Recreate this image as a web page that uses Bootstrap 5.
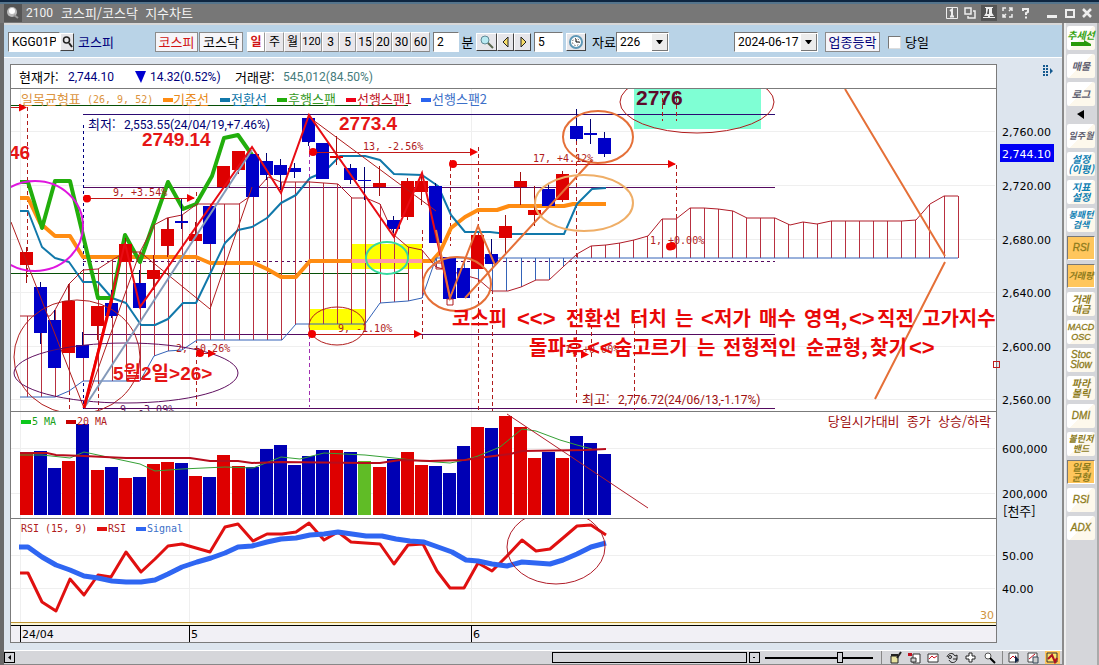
<!DOCTYPE html>
<html lang="ko">
<head>
<meta charset="utf-8">
<meta name="viewport" content="width=device-width, initial-scale=1">
<title>2100 코스피/코스닥 지수차트</title>
<link href="https://cdn.jsdelivr.net/npm/bootstrap@5.3.0/dist/css/bootstrap.min.css" rel="stylesheet">
<style>
body{font:13px/16px "Noto Sans CJK KR",sans-serif;color:#000;background:#dde5ee;overflow-x:hidden}
.num{font:12px/16px Roboto,"Noto Sans CJK KR",sans-serif}
.titlebar{height:23px;background:#777;border-top:2px solid #0d2540;box-shadow:inset 0 2px #54748c;color:#f2f2f2;padding:0 6px 0 4px}
.titlebar button{border:0;padding:0;background:none;color:#eee;line-height:0}
.frame-left{border-left:4px solid #6a6a6a}
.toolbar{height:35px;background:#b9d3e7;border-top:2px solid #d8d8d8;border-bottom:1px solid #fff;padding:2px 4px 0 4px}
.toolbar input[type=text],.toolbar select{height:20px;border:1px solid #777;border-right-color:#fff;border-bottom-color:#fff;background:#fff;padding:0 3px;border-radius:0;font:12px/16px Roboto,sans-serif;color:#000;min-width:0}
.toolbar select{appearance:none;background:#fff url("data:image/svg+xml,%3Csvg xmlns='http://www.w3.org/2000/svg' width='17' height='18'%3E%3Cpath d='M0 0h17v18H0z' fill='%23fff'/%3E%3Cpath d='M1 1h16v17H1z' fill='%23777'/%3E%3Cpath d='M1 1h15v16H1z' fill='%23ececec'/%3E%3Cpath d='M5 7h7l-3 4h-1z'/%3E%3C/svg%3E") right center no-repeat}
.flat{height:20px;border:1px solid #8c8c8c;background:#f6f5f9;padding:0;font:inherit;line-height:16px;color:#000}
.per{background:#e9e7eb;border-color:#fff #999 #888 #fff;font:12px/16px Roboto,"Noto Sans CJK KR",sans-serif}
.per.tight{font-size:11px}
.per.sel{color:#d01414;background:#fff;font-weight:bold}
.raised{height:18px;border:1px solid;border-color:#fff #444 #444 #fff;background:#e6e6ea;padding:0;line-height:0}
.tick{width:13px;height:13px;border:1px solid #777;border-right-color:#ddd;border-bottom-color:#ddd;background-color:#fff}
.info{height:24px;background:#fff;border:1px solid #7b7b7b;border-bottom:0;padding:0 8px;margin-top:6px}
.plot{display:block;width:100%;height:auto}
.plot text{white-space:pre}
.mono{font:10px "DejaVu Sans Mono",monospace}
.axis{font:11px "DejaVu Sans",sans-serif}
.note{font:bold 19px "Liberation Sans","Noto Sans CJK KR",sans-serif;fill:#e51515}
.big{font:bold 20px "Noto Sans CJK KR",sans-serif;fill:#e80808}
.ang{font:bold 22px "Liberation Sans",sans-serif}
.side{width:37px;background:#d5d6da;border-left:2px solid #8b8b8b;border-right:2px solid #aaa;padding:3px 0 0 3px;box-shadow:inset 2px 0 #eee}
.side button{width:28px;height:24px;margin-bottom:4px;border:0;border-radius:2px;padding:0;background:linear-gradient(135deg,#fff 50%,#fdf8ec 50%);font:italic bold 10px/10px "Noto Sans CJK KR",sans-serif;color:#8d7b1c;white-space:nowrap}
.side button.lat{font:italic 10px/10px "Liberation Sans",sans-serif;-webkit-text-stroke:.3px}
.side button.small-lat{font-size:9px}
.side button.on{background:#ffc65c;border:1px solid;border-color:#777 #fff #fff #777;border-radius:0}
.side .wide-ko{font-size:9px}
.side .gray{color:#5e5e70}.side .teal{color:#1181b4}.side .grn{color:#35a312}
.side .arrow{width:28px;height:14px;line-height:0;text-align:center}
.foot{height:15px;background:#d5d6da;border-top:1px solid #fff;border-bottom:1px solid #888}
.foot button{border:0;padding:0;background:none;line-height:0}
.foot .sq{width:11px;height:11px;border:1px solid #000}
.thumb{height:11px;border:1px solid #000;width:195px}
input.zoom{appearance:none;width:108px;height:11px;background:linear-gradient(#000,#000) center/100% 2px no-repeat;margin:0}
input.zoom::-webkit-slider-thumb{appearance:none;width:6px;height:11px;border:1px solid #000;background:#d5d6da}
.sep{width:1px;height:13px;background:#888}
</style>
</head>
<body>
<div class="d-flex flex-column min-vh-100">
<header class="titlebar d-flex align-items-center">
  <svg width="18" height="18" viewBox="0 0 18 18" aria-hidden="true"><path d="M0 0h18v18H0z" fill="#555"/><circle cx="8" cy="8" r="5" fill="#bbb"/><circle cx="8" cy="7" r="3" fill="#fff"/><path d="M10 11l4 3" stroke="#999" stroke-width="2"/></svg>
  <span class="ms-1 num">2100</span><span class="ms-2">코스피/코스닥&nbsp; 지수차트</span>
  <div class="ms-auto d-flex align-items-center">
    <button aria-label="1"><svg width="14" height="14" fill="none" stroke="#eee"><path d="M1.500 1.500h11v11h-11z"/><path d="M5 5l2-1.500v7M5 10.500h4" stroke-width="2"/></svg></button>
    <button class="ms-1" aria-label="복사"><svg width="14" height="14" fill="none" stroke="#eee" stroke-width="1.500"><path d="M2 2h6v6H2zM10 5h2v7H5v-2"/></svg></button>
    <button class="ms-1" aria-label="고정"><svg width="16" height="16"><path d="M0 0h16v16H0z" fill="#555"/><path d="M4 2h8v1h-1v5l2 3H3l2-3V3H4zM2 12h12v1H2zM7 10h2v3H7z" fill="#eee"/><path d="M7 4h1v5H6z" fill="#555"/></svg></button>
    <button class="ms-1" aria-label="확대"><svg width="14" height="14" fill="none" stroke="#eee" stroke-width="1.500"><path d="M2 5V2h3M8 2h3v3M11 8v3H8M5 11H2V8M8 5l3-3M5 8l-3 3"/></svg></button>
    <button class="ms-1" aria-label="도움말"><svg width="14" height="14" fill="none" stroke="#eee" stroke-width="2"><path d="M4 5V3h5v3L7 7v2M7 10.500v2"/></svg></button>
    <button class="ms-2 ps-1" aria-label="최소화"><svg width="14" height="14"><path d="M2 9h10v3H2z" fill="#eee"/></svg></button>
    <button class="ms-1" aria-label="최대화"><svg width="14" height="14" fill="none" stroke="#eee" stroke-width="2"><path d="M3 4h8v7H3zM2 4h10"/></svg></button>
    <button class="ms-1" aria-label="닫기"><svg width="12" height="14" fill="none" stroke="#eee" stroke-width="2.500"><path d="M2 3l8 8M10 3l-8 8"/></svg></button>
  </div>
</header>
<div class="d-flex flex-fill frame-left">
<main class="flex-fill d-flex flex-column" style="min-width:0">
  <form class="toolbar d-flex align-items-center" onsubmit="return false">
    <input type="text" aria-label="종목코드" value="KGG01P" style="width:52px">
    <button class="raised" aria-label="종목 검색" style="width:14px"><svg width="11" height="14" fill="none" stroke="#222" stroke-width="1.500"><circle cx="4.500" cy="5" r="3"/><path d="M7 8l3 4" stroke-width="2"/></svg></button>
    <span class="ms-1" style="width:77px;color:#00007b">코스피</span>
    <button class="flat" style="width:43px;color:#d01414">코스피</button>
    <button class="flat me-1" style="width:44px;margin-left:1px">코스닥</button>
    <div class="d-flex" role="group" aria-label="주기" id="periods"></div>
    <input type="text" aria-label="분 단위" value="2" style="width:26px;margin-left:3px">
    <span class="text-center" style="width:17px">분</span>
    <button class="raised" aria-label="돋보기" style="width:21px"><svg width="18" height="16"><circle cx="7" cy="6" r="4" fill="#b8eaf2" stroke="#5f8996"/><path d="M10 9l5 5" stroke="#5b6850" stroke-width="2"/></svg></button>
    <button class="raised" aria-label="이전" style="width:17px"><svg width="14" height="14"><path d="M9 2v10L4 7z" fill="#f7dd67" stroke="#222"/></svg></button>
    <button class="raised" aria-label="다음" style="width:17px"><svg width="14" height="14"><path d="M5 2v10l5-5z" fill="#f7dd67" stroke="#222"/></svg></button>
    <input type="text" aria-label="개수" value="5" style="width:29px;margin-left:3px">
    <button class="raised" aria-label="시간" style="width:20px;margin-left:3px"><svg width="16" height="16" fill="none"><circle cx="8" cy="8" r="6" fill="#fff" stroke="#5e98b7" stroke-width="2"/><path d="M8 5v3h3" stroke="#000"/><circle cx="8" cy="8" r="3.500" stroke="#222" stroke-dasharray="1 2"/></svg></button>
    <label for="cnt" class="text-nowrap" style="margin-left:6px;width:24px">자료</label>
    <select id="cnt" style="width:53px"><option>226</option></select>
    <select aria-label="날짜" style="width:84px;margin-left:65px"><option>2024-06-17</option></select>
    <button class="flat" style="width:55px;margin-left:7px;color:#00007b">업종등락</button>
    <input type="checkbox" id="today" class="form-check-input tick rounded-0 my-0 me-0 ms-2">
    <label for="today" class="ms-1">당일</label>
  </form>
  <section class="d-flex" style="padding-left:6px">
    <div class="info flex-fill d-flex align-items-center text-nowrap">
      <span style="width:49px">현재가:</span><span class="num" style="width:67px;color:#00007b">2,744.10</span>
      <span style="width:100px;color:#00007b" class="num d-flex align-items-center"><svg width="12" height="14"><path d="M0 1h11L6 13z" fill="#0000d0"/></svg>&nbsp;14.32(0.52%)</span>
      <span style="width:48px">거래량:</span><span class="num" style="color:#447b7b">545,012(84.50%)</span>
    </div>
    <div class="text-center" style="width:65px;padding:4px 0 0 38px"><svg width="14" height="14" fill="#14598f"><path d="M1 1h2v2H1zM4 1h2v2H4zM1 4h2v2H1zM4 4h2v2H4zM1 7h2v2H1zM4 7h2v2H4zM1 10h2v2H1zM4 10h2v2H4zM8 4l3 3-3 3z"/></svg></div>
  </section>
  <div style="padding-left:6px">
  <svg class="plot" viewBox="10 88 1052 555" role="img" aria-label="코스피 지수 차트" id="plot">
    <defs>
      <clipPath id="cp"><path d="M11 89h985v322H11z"/></clipPath>
      <clipPath id="cr"><path d="M11 519h985v103H11z"/></clipPath>
      <marker id="ar" viewBox="0 0 8 8" refX="6" refY="4" markerWidth="8" markerHeight="8" markerUnits="userSpaceOnUse"><path d="M0 0l8 4-8 4z" fill="#f00000"/></marker>
      <marker id="dt" viewBox="0 0 8 8" refX="4" refY="4" markerWidth="8" markerHeight="8" markerUnits="userSpaceOnUse"><circle cx="4" cy="4" r="4" fill="#f00000"/></marker>
    </defs>
    <path d="M10 88h987v555H10z" fill="#7b7b7b"/><path d="M11 88h985v554H11z" fill="#fff"/>
    <g stroke="#efefef" shape-rendering="crispEdges"><path d="M11 131.500h984M11 185.500h984M11 239.500h984M11 292.500h984M11 346.500h984M11 399.500h984M11 448.500h984M11 493.500h984M11 555.500h984M11 588.500h984M20.500 89v533M189.500 89v533M471.500 89v533"/></g>
    <g clip-path="url(#cp)" fill="none">
      <path d="M634 89h127v40H634z" fill="#7fffd4"/>
      <path d="M352 244h70v25h-70zM309 309h56v21h-56z" fill="#ff0"/>
      <g shape-rendering="crispEdges">
        <path d="M11 105.500h397M11 273.500h397" stroke="#064f06"/>
        <path d="M83 187.500h692M83 334.500h692M83 408.500h692" stroke="#550a60"/><path d="M83 114.500h692" stroke="#2b0a72"/>
        <path d="M83 261.500h692" stroke="#550a60" stroke-dasharray="3 3"/>
        <g stroke="#b01c1c" stroke-dasharray="4 3"><path d="M27.500 107v170M69.500 300v110M98.500 380v30M196.500 192v216M422.500 230v112M450.500 160v86M478.500 147v264M492.500 290v121M576.500 141v262M591.500 325v34M634.500 310v100M662.500 91v30M676.500 91v30M676.500 165v55"/></g>
        <path d="M83.500 125v284" stroke="#000080" stroke-dasharray="3 3"/><path d="M309.500 118v289" stroke="#a030b0" stroke-dasharray="4 3"/>
        <g id="cloud"></g>
      </g>
      <g stroke-linejoin="round">
        <polyline points="20,198 28,198 40,223 55,236 70,236 83,257 196,257 210,263 254,263 267,269 281,277 296,277 310,261 432,261 440,252 451,228 465,217 478,210 497,210 509,206 564,206 573,204 606,204" stroke="#ff8c12" stroke-width="4"/>
        <path d="M352 261h70" stroke="#ff99a8" stroke-width="4"/>
        <polyline points="20,211 28,211 42,247 55,258 69,262 83,282 98,282 112,298 126,303 141,325 155,325 168,319 183,303 196,303 210,274 225,243 238,230 252,227 267,218 281,203 296,195 310,178 324,172 340,156 365,156 380,160 394,174 422,175 438,186 451,215 465,232 490,232 507,234 564,234 577,204 592,189 606,188" stroke="#1178aa" stroke-width="2"/>
        <polyline points="20,182 28,182 42,228 55,181 70,181 98,298 112,298 125,235 140,262 168,182 183,209 196,204 212,176 224,138 238,135 252,155" stroke="#22ae0c" stroke-width="4"/>
        <polyline id="span1" stroke="#b01c28"/><polyline id="span2" stroke="#3463b8"/>
      </g>
      <g id="candles" shape-rendering="crispEdges"></g>
      <g stroke="#b01c1c">
        <path d="M309 117L436 211M11 222L84 408 140 252 210 309 252 187"/>
        <ellipse cx="77" cy="357" rx="63" ry="57"/><ellipse cx="697" cy="102" rx="77" ry="31"/><ellipse cx="337" cy="326" rx="28" ry="19"/>
        <path d="M447 299h6v6h-6zM436 263h6v6h-6z"/>
      </g>
      <ellipse cx="35" cy="226" rx="48" ry="45" stroke="#df16df" stroke-width="2"/>
      <ellipse cx="126" cy="373" rx="112" ry="30" stroke="#601060"/>
      <ellipse cx="387" cy="258" rx="21" ry="16" stroke="#36d9a0" stroke-width="2"/>
      <path d="M84 408L252 150" stroke="#8499b8" stroke-width="2"/>
      <path d="M84 408L125 243 140 307 252 147 281 193 309 115 394 237 422 173 450 298" stroke="#e80c14" stroke-width="2"/>
      <path d="M84 408L112 298" stroke="#f00000" stroke-width="3"/>
      <g stroke="#e57038" stroke-width="2"><path d="M436 230L450 298 478 226 495 265M465 298L592 160M845 89L945 256M945 262L875 399"/><ellipse cx="457" cy="284" rx="34" ry="27"/><ellipse cx="598" cy="137" rx="35" ry="26"/></g>
      <ellipse cx="584" cy="203" rx="49" ry="28" stroke="#efae67" stroke-width="2"/>
      <g stroke="#c01818" shape-rendering="crispEdges"><path d="M11 107.500H25" marker-end="url(#ar)"/><path d="M87 198.500H194M313 152.500H476M453 164.500H675M312 334.500H420M200 353.500H214" marker-end="url(#ar)" marker-start="url(#dt)"/><path d="M670 246.500h2M585 354.500h2" marker-start="url(#dt)" marker-end="url(#ar)"/></g>
      <g fill="#f00000"><path d="M187 194l8 4-8 4zM470 148l8 4-8 4zM668 160l8 4-8 4zM414 330l8 4-8 4z"/><circle cx="313" cy="152" r="4"/><circle cx="453" cy="164" r="4"/><circle cx="312" cy="334" r="4"/><circle cx="200" cy="353" r="4"/><circle cx="672" cy="246" r="4"/></g>
      <g class="mono" fill="#b01c1c"><text x="113" y="196">9, +3.54%</text><text x="363" y="150">13, -2.56%</text><text x="533" y="162">17, +4.12%</text><text x="338" y="332">9, -1.10%</text><text x="176" y="352">2, +0.26%</text><text x="650" y="244">1, +0.00%</text><text x="565" y="353">1, +0.00%</text></g>
      <text class="mono" x="120" y="413" fill="#601060">9, -3.09%</text>
      <text x="88" y="129" fill="#000072">최저:</text><text class="num" x="124" y="129" fill="#000072">2,553.55(24/04/19,+7.46%)</text>
      <text x="582" y="404" fill="#a01010">최고:</text><text class="num" x="618" y="404" fill="#a01010">2,776.72(24/06/13,-1.17%)</text>
      <g class="note"><text x="9" y="159">46</text><text x="142" y="146">2749.14</text><text x="339" y="130">2773.4</text><text x="113" y="380">5월2일&gt;26&gt;</text></g>
      <text x="636" y="105" style="font:bold 21px 'Liberation Sans',sans-serif" fill="#5d0a2b">2776</text>
      <g class="big"><text x="452" y="326">코스피</text><text class="ang" x="517" y="326">&lt;&lt;&gt;</text><text x="566" y="326">전환선</text><text x="630" y="326">터치</text><text x="675" y="326">는</text><text class="ang" x="701" y="326">&lt;</text><text x="714" y="326">저가</text><text x="759" y="326">매수</text><text x="804" y="326">영역,</text><text class="ang" x="849" y="326">&lt;&gt;</text><text x="877" y="326">직전</text><text x="922" y="326">고가지수</text>
      <text x="529" y="355">돌파후</text><text class="ang" x="587" y="355">&lt;&lt;</text><text x="614" y="355">숨고르기</text><text x="697" y="355">는</text><text x="723" y="355">전형적인</text><text x="806" y="355">순균형,</text><text x="870" y="355">찾기</text><text class="ang" x="909" y="355">&lt;&gt;</text></g>
    </g>
    <g id="legend1">
      <text x="21" y="104" fill="#dc9440">일목균형표</text><text x="87" y="103" class="mono" fill="#dc9440">(26, 9, 52)</text>
      <path d="M163 98h10v4h-10z" fill="#ff8c12"/><text x="173" y="104" fill="#e88a20">기준선</text>
      <path d="M220 98h10v4h-10z" fill="#1178aa"/><text x="231" y="104" fill="#1178aa">전환선</text>
      <path d="M277 98h10v4h-10z" fill="#22ae0c"/><text x="288" y="104" fill="#349a24">후행스팬</text>
      <path d="M346 98h10v4h-10z" fill="#f00018"/><text x="357" y="104" fill="#c01424">선행스팬1</text>
      <path d="M421 98h10v4h-10z" fill="#2a64ef"/><text x="432" y="104" fill="#3c70c8">선행스팬2</text>
    </g>
    <g stroke="#7b7b7b" shape-rendering="crispEdges"><path d="M11 88.500h985M11 411.500h985M11 518.500h985"/></g>
    <g id="bars" shape-rendering="crispEdges"></g>
    <g fill="none"><polyline points="20,455 42,455 70,458 84,452 112,458 140,464 155,471 182,469 225,467 253,468 281,457 300,459 324,453 365,455 394,458 422,461 450,463 465,460 478,456 500,447 522,429 536,431 560,440 577,445 592,449" stroke="#35a035"/>
    <polyline points="20,453 47,453 56,455 84,456 126,458 190,458 210,461 238,461 252,463 280,462 365,463 380,463 400,460 430,461 465,460 478,458 510,454 522,451 585,450 606,449" stroke="#b80c1c" stroke-width="2"/>
    <path d="M507 414L648 508" stroke="#b01c28"/></g>
    <g class="mono"><path d="M21 420h10v4h-10z" fill="#0cc81c"/><text x="32" y="425" fill="#18a018">5 MA</text><path d="M66 420h10v4h-10z" fill="#c80000"/><text x="77" y="425" fill="#b01c1c">20 MA</text></g>
    <text x="991" y="426" text-anchor="end" fill="#a01010">당일시가대비&#160; 종가&#160; 상승/하락</text>
    <g clip-path="url(#cr)" fill="none" stroke-linejoin="round">
      <polyline points="20,573 28,573 42,602 56,611 70,579 84,595 98,575 111,577 126,552 141,572 155,559 168,546 182,544 196,548 210,552 225,527 238,524 253,541 267,534 282,534 296,532 309,523 324,540 338,532 351,542 365,543 380,544 394,564 408,545 423,544 437,571 450,588 464,588 478,563 492,571 507,556 522,540 536,551 550,549 563,538 577,526 591,525 606,535" stroke="#e01010" stroke-width="3"/>
      <polyline points="19,547 28,547 42,557 56,565 70,570 84,576 98,578 112,581 126,582 141,582 155,580 168,574 182,567 197,562 211,558 225,553 238,547 252,546 267,542 281,539 296,538 310,535 324,534 338,532 352,534 366,536 382,536 396,539 410,541 424,542 438,547 452,552 466,560 478,561 492,564 507,566 522,562 536,563 550,564 563,560 577,554 591,547 606,543" stroke="#2f66f2" stroke-width="5"/>
      <ellipse cx="556" cy="547" rx="49" ry="37" stroke="#b01c28"/>
    </g>
    <g class="mono"><text x="21" y="532" fill="#b01c1c">RSI (15, 9)</text><path d="M97 527h10v4h-10z" fill="#e01010"/><text x="108" y="532" fill="#b01c1c">RSI</text><path d="M136 527h10v4h-10z" fill="#2f66f2"/><text x="147" y="532" fill="#3c70c8">Signal</text></g>
    <g shape-rendering="crispEdges"><path d="M11 623h985v2H11z" fill="#fbf6d8"/><path d="M11 622.500h985" stroke="#be9432"/><path d="M11 625h985v17H11z" fill="#f1f0f5"/><path d="M11 625.500h985M20.500 625v17M189.500 625v17M471.500 625v17" stroke="#000"/></g>
    <g class="axis"><text x="22" y="638">24/04</text><text x="191" y="638">5</text><text x="473" y="638">6</text><text x="980" y="619" fill="#d09440">30</text>
      <text x="1002" y="136">2,760.00</text><path d="M1000 144h54v18h-54z" fill="#0000f4"/><text x="1002" y="158" fill="#fff">2,744.10</text><text x="1002" y="190">2,720.00</text><text x="1002" y="244">2,680.00</text><text x="1002" y="297">2,640.00</text><text x="1002" y="351">2,600.00</text><text x="1002" y="404">2,560.00</text><text x="1002" y="453">600,000</text><text x="1002" y="498">200,000</text><text x="1002" y="560">50.00</text><text x="1002" y="593">40.00</text></g>
    <text x="1003" y="516">[천주]</text>
    <path d="M993.500 361.500h6v6h-6z" fill="none" stroke="#c01c1c" shape-rendering="crispEdges"/>
  </svg>
  </div>
  <div class="foot d-flex align-items-center mt-auto">
    <button class="sq" aria-label="왼쪽"><svg width="9" height="9"><path d="M6 2v5L3 4.500z"/></svg></button>
    <div class="ms-auto thumb"></div>
    <button class="sq" aria-label="축소" style="margin-left:2px"><svg width="9" height="9"><path d="M3 4h2v1H3z"/></svg></button>
    <input type="range" class="zoom" aria-label="확대 비율" value="71" style="margin-left:5px">
    <span class="sep" style="margin:0 4px 0 8px"></span>
    <div class="d-flex" id="tools"></div>
  </div>
</main>
<aside class="side d-flex flex-column flex-shrink-0" id="side"></aside>
</div>
</div>
<script src="https://cdn.jsdelivr.net/npm/bootstrap@5.3.0/dist/js/bootstrap.bundle.min.js"></script>
<script>
const $ = id => document.getElementById(id);
// period buttons: label, width
$('periods').innerHTML = [['일',18],['주',19],['월',17],['120',21],['3',17],['5',17],['15',18],['20',18],['30',19],['60',19]]
  .map(([t,w],i)=>`<button class="flat per ${i==0?'sel':t=='120'?'tight':''}" style="width:${w}px">${t}</button>`).join('');
// open/close body and wick: [colour, body top, body bottom, wick top, wick bottom]
const C = [['r',252,265,247,283],['b',287,333,282,344],['b',320,368,310,368],['r',301,353,284,353],['b',345,358,332,358],['r',306,326,306,340],['b',303,316,290,318],['r',244,262,238,262],['b',283,308,270,308],['r',270,279,255,290],['r',229,246,218,257],['b',221,223,199,229],['r',234,241,222,241],['b',206,244,206,244],['r',166,187,166,187],['r',151,170,151,174],['b',154,197,154,197],['b',161,175,153,180],['b',165,175,159,190],['b',168,172,163,178],['b',118,142,114,146],['b',143,179,143,179],['r',156,158,136,165],['b',168,180,164,184],['b',180,181,167,200],['r',183,187,166,196],['b',220,229,216,233],['r',181,217,178,220],['r',181,192,175,205],['b',186,243,183,243],['b',257,299,257,299],['b',268,298,268,298],['r',235,269,235,269],['b',254,264,239,264],['r',226,238,215,255],['r',181,187,172,205],['r',210,215,186,226],['b',189,206,183,208],['r',174,200,171,202],['b',126,139,109,141],['b',133,135,119,144],['b',138,154,132,157]];
const V = [453,451,468,461,424,470,467,478,477,464,462,463,476,477,455,466,467,449,445,465,456,450,450,452,461,467,459,452,465,466,473,446,427,428,416,427,458,452,458,436,443,454];
const volRed = new Set([0,3,5,7,9,10,12,14,15,22,25,27,28,32,34,35,36,38]);
const X = i => Math.round(20 + i*14.1);
$('candles').innerHTML = C.map(([c,a,b,t,u],i)=>{const f=c=='r'?'#de0000':'#0000c8',w=c=='r'?'#a01010':'#000070';
  return `<rect x="${X(i)+6}" y="${t}" width="1" height="${u-t}" fill="${w}"/><rect x="${X(i)}" y="${a}" width="13" height="${b-a}" fill="${f}"/>`}).join('');
$('bars').innerHTML = V.map((t,i)=>`<rect x="${X(i)}" y="${t}" width="13" height="${515-t}" fill="${i==24?'#60bc26':volRed.has(i)?'#de0000':'#0000b4'}"/>`).join('');
const S1=[[20,316],[50,316],[55,310],[69,284],[83,270],[98,269],[112,260],[126,252],[140,252],[154,225],[167,218],[182,215],[197,204],[239,204],[252,195],[268,177],[281,182],[310,182],[338,184],[352,198],[366,198],[380,204],[394,235],[408,247],[422,250],[436,267],[478,279],[492,291],[508,291],[521,287],[536,280],[549,280],[577,254],[591,246],[606,245],[620,243],[634,240],[648,236],[662,219],[676,219],[690,208],[704,208],[718,209],[733,211],[747,218],[775,218],[790,225],[803,222],[817,224],[831,221],[902,221],[916,220],[930,204],[944,196],[958,196]];
const S2=[[20,397],[55,397],[69,391],[83,381],[140,381],[154,356],[168,351],[182,350],[197,340],[282,340],[296,324],[365,324],[380,303],[408,301],[422,298],[436,258],[958,258]];
const at=(s,x)=>{for(let i=1;i<s.length;i++)if(x<=s[i][0]){const[p,q]=[s[i-1],s[i]];return Math.round(p[1]+(q[1]-p[1])*(x-p[0])/(q[0]-p[0]))}return s[s.length-1][1]};
$('span1').setAttribute('points',S1.join(' '));$('span2').setAttribute('points',S2.join(' '));
let h='';for(let i=0;i<67;i++){const x=Math.min(958,Math.round(27+i*14.1)),a=at(S1,x),b=at(S2,x);h+=`<path d="M${x}.5 ${a}V${b}" stroke="${a<b?'#b83040':'#3463b8'}"/>`}
$('cloud').innerHTML=h;
$('side').innerHTML=[['추세선','grn'],['매물','gray'],['로그','gray'],null,['일주월','gray wide-ko'],['설정<br>(이평)','teal'],['지표<br>설정','teal'],['봉패턴<br>검색','teal wide-ko'],['RSI','on lat'],['거래량','on wide-ko'],['거래<br>대금',''],['MACD<br>OSC','lat small-lat'],['Stoc<br>Slow','lat'],['파라<br>볼릭',''],['DMI','lat'],['볼린저<br>밴드','wide-ko'],['일목<br>균형','on'],['RSI','lat'],['ADX','lat']]
 .map((b,i)=>b?`<button class="${b[1]}">${b[0]}${i?'':'<svg class="d-block mx-auto" width="20" height="7"><path d="M0 2h13V0l7 4v2H0z" fill="#2a9a0c"/></svg>'}</button>`:'<div class="arrow"><svg width="8" height="9"><path d="M7 0v9L0 4z"/></svg></div>').join('');
const icons=['<path d="M3 5h7v7H3z" fill="#e8e2a0" stroke="#222"/><path d="M3 4h7M9 7l4-6" stroke="#222" stroke-width="2"/>','<path d="M6 3h7v9H6z" fill="#fff" stroke="#333"/><path d="M1 2h4v3H1z" fill="#c01020"/><path d="M4 7h5v4H4z" fill="#d0d0d0" stroke="#333"/>','<path d="M2 3h10v8H2z" fill="#fff" stroke="#333"/><path d="M3 8l3-3 2 2 3-2" stroke="#d01020"/>','<path d="M2 6c1-4 6-5 8-1l2-1v4H8M12 8c-1 4-6 5-8 1" stroke="#222"/><circle cx="5" cy="6" r="1.500" stroke="#222"/>','<path d="M5 2h3v3h3v3H8v3H5V8H2V5h3z" fill="#fff" stroke="#222"/>','<circle cx="5" cy="5" r="3" fill="#fff" stroke="#555"/><path d="M7 7l5 5" stroke="#000" stroke-width="2"/>',0,'<path d="M2 2h9v9H2z" fill="#fff" stroke="#444"/><path d="M3 8l3-3 2 2" stroke="#c01020"/><path d="M8 4v8l4-3z" fill="#124"/>','<path d="M2 2h9v9H2z" fill="#fff" stroke="#444"/><path d="M3 8l6-5" stroke="#c01020"/><path d="M7 6h5v6H7z" fill="#ccc" stroke="#345"/>','<path d="M0 0h15v13H0z" fill="#ffc65c"/><path d="M2 2h10v9H2z" fill="#fce36b" stroke="#333"/><path d="M3 8l4-4 3 7 2-4" stroke="#b01020" stroke-width="2"/>'];
$('tools').innerHTML=icons.map((s,i)=>s?`<button aria-label="도구 ${i+1}" style="width:19px"><svg width="15" height="13" fill="none">${s}</svg></button>`:'<span class="sep" style="margin:0 2px"></span>').join('');
</script>
</body>
</html>
